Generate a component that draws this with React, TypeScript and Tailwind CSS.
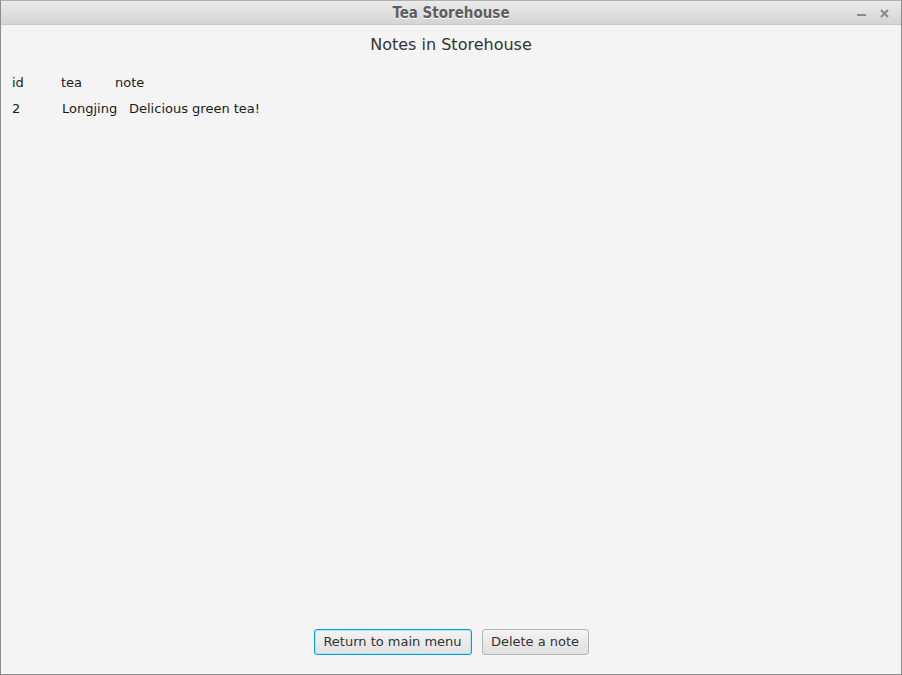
import React from "react";

function TitleBar() {
  return (
    <div className="relative h-[24px] flex items-center justify-center bg-gradient-to-b from-[#ebebeb] to-[#d4d4d4] border-b border-[#c8c8c8] rounded-t-[3px]">
      <span className="mt-[2px] text-[15px] font-bold text-[#5e5e5e] [text-shadow:0_1px_0_#ffffff] [font-family:'DejaVu_Sans_Condensed','DejaVu_Sans',sans-serif]">
        Tea Storehouse
      </span>
      <div className="absolute right-[12px] top-0 h-full flex items-center gap-[14px] text-[#8a8a8a]">
        <div className="w-[9px] h-[2px] bg-[#8a8a8a] mt-[4px]" />
        <svg width="9" height="9" viewBox="0 0 9 9" className="mt-[1px]">
          <path d="M1 1 L8 8 M8 1 L1 8" stroke="#8a8a8a" strokeWidth="2" />
        </svg>
      </div>
    </div>
  );
}

function App() {
  return (
    <div className="w-[902px] h-[675px] bg-[#f4f4f4] border border-[#8c8c8c] border-t-[#b0b0b0] flex flex-col text-[#1a1a1a] [font-family:'DejaVu_Sans',sans-serif] overflow-hidden">
      <TitleBar />
      <div className="flex-1 flex flex-col">
        <h1 className="text-center text-[16px] text-[#333] mt-[10px] leading-[20px]">Notes in Storehouse</h1>
        <div className="mt-[20px] pl-[11px] text-[13px] leading-[16px]">
          <div className="flex">
            <span className="w-[49px]">id</span>
            <span className="w-[54px]">tea</span>
            <span>note</span>
          </div>
          <div className="flex mt-[10px]">
            <span className="w-[50px]">2</span>
            <span className="w-[67px]">Longjing</span>
            <span>Delicious green tea!</span>
          </div>
        </div>
        <div className="flex-1" />
        <div className="flex justify-center gap-[10px] mb-[19px] text-[13px] text-[#333]">
          <button className="w-[158px] h-[26px] rounded-[3px] border border-[#039ed3] bg-gradient-to-b from-[#f3f3f3] to-[#e2e2e2] shadow-[inset_0_0_0_1px_#b8e3f5]">
            Return to main menu
          </button>
          <button className="w-[107px] h-[26px] rounded-[3px] border border-[#b5b5b5] bg-gradient-to-b from-[#f3f3f3] to-[#e0e0e0]">
            Delete a note
          </button>
        </div>
      </div>
    </div>
  );
}

export default App;
